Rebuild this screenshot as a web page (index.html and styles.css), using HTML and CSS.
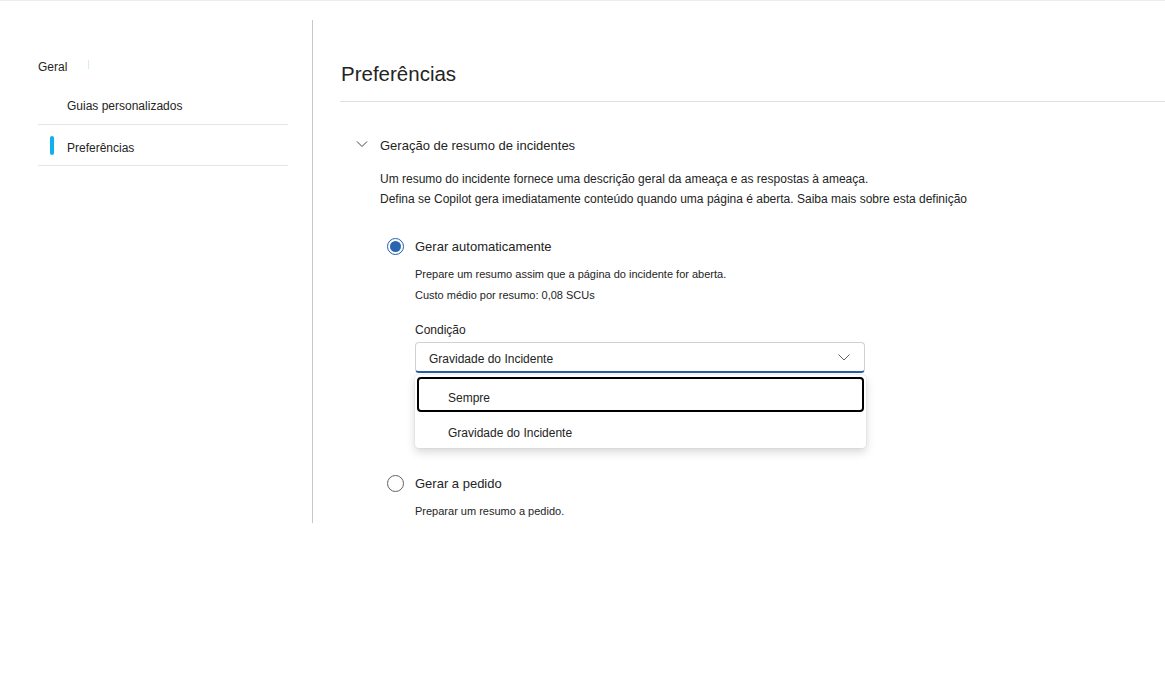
FILE: index.html
```html
<!DOCTYPE html>
<html lang="pt">
<head>
<meta charset="utf-8">
<title>Preferências</title>
<link rel="stylesheet" href="styles.css">
</head>
<body>
<div class="page">
  <nav class="sidebar">
    <div class="nav-group">Geral<span class="tick"></span></div>
    <ul class="nav-list">
      <li class="nav-item">Guias personalizados</li>
      <li class="nav-item active"><span class="indicator"></span>Preferências</li>
    </ul>
  </nav>
  <main class="main">
    <h1 class="title">Preferências</h1>
    <section class="section">
      <div class="section-head">
        <svg class="chev" width="12" height="12" viewBox="0 0 12 12"><path d="M1 3.5 L6 8.5 L11 3.5" fill="none" stroke="#424242" stroke-width="1"/></svg>
        <span>Geração de resumo de incidentes</span>
      </div>
      <div class="section-body">
        <p class="desc">Um resumo do incidente fornece uma descrição geral da ameaça e as respostas à ameaça.<br>Defina se Copilot gera imediatamente conteúdo quando uma página é aberta. Saiba mais sobre esta definição</p>

        <div class="option">
          <div class="radio-row">
            <span class="radio checked"></span>
            <span class="radio-label">Gerar automaticamente</span>
          </div>
          <div class="option-body">
            <p class="sub">Prepare um resumo assim que a página do incidente for aberta.<br>Custo médio por resumo: 0,08 SCUs</p>
            <div class="field-label">Condição</div>
            <div class="dropdown-wrap">
              <div class="dropdown">
                <span>Gravidade do Incidente</span>
                <svg class="dd-chev" width="14" height="14" viewBox="0 0 14 14"><path d="M1.5 4.5 L7 10 L12.5 4.5" fill="none" stroke="#616161" stroke-width="1"/></svg>
              </div>
              <div class="listbox">
                <div class="opt focused">Sempre</div>
                <div class="opt">Gravidade do Incidente</div>
              </div>
            </div>
          </div>
        </div>

        <div class="option second">
          <div class="radio-row">
            <span class="radio"></span>
            <span class="radio-label">Gerar a pedido</span>
          </div>
          <div class="option-body">
            <p class="sub single">Preparar um resumo a pedido.</p>
          </div>
        </div>
      </div>
    </section>
  </main>
</div>
</body>
</html>
```
FILE: styles.css
```css
* { box-sizing: border-box; }
html, body { margin: 0; padding: 0; background: #fff; }
body {
  font-family: "Liberation Sans", Arial, sans-serif;
  color: #242424;
  border-top: 1px solid #ececec;
}
.page {
  display: flex;
  align-items: stretch;
  padding-top: 19px;
}
.sidebar {
  width: 313px;
  flex: none;
  border-right: 1px solid #c8c8c8;
  padding: 36px 24px 0 38px;
}
.nav-group {
  font-size: 12px;
  line-height: 22px;
  height: 22px;
  position: relative;
}
.tick {
  position: absolute;
  left: 50px;
  top: 4px;
  width: 1px;
  height: 9px;
  background: #cdeefa;
}
.nav-list {
  list-style: none;
  margin: 6px 0 0 0;
  padding: 0;
}
.nav-item {
  position: relative;
  height: 41px;
  line-height: 40px;
  font-size: 12px;
  padding: 2px 0 0 29px;
  border-bottom: 1px solid #e6e6e6;
}
.nav-item.active { line-height: 42px; }
.indicator {
  position: absolute;
  left: 12px;
  top: 11px;
  width: 4px;
  height: 19px;
  border-radius: 2px;
  background: #0fb0ee;
}
.main {
  flex: 1;
  padding: 0 0 2px 27px;
}
.title {
  margin: 0;
  padding: 40px 0 13px 1px;
  font-size: 20.5px;
  line-height: 28px;
  font-weight: 400;
  border-bottom: 1px solid #e0e0e0;
}
.section-head {
  display: flex;
  align-items: center;
  height: 22px;
  margin-top: 32px;
  font-size: 13px;
}
.chev { margin-left: 16px; margin-right: 12px; margin-top: -3px; }
.section-body { padding-left: 40px; }
.desc {
  margin: 13px 0 0 0;
  font-size: 12px;
  line-height: 20px;
}
.option { margin-top: 27px; }
.option.second { margin-top: 100px; }
.radio-row {
  display: flex;
  align-items: center;
  height: 20px;
}
.radio {
  width: 17px;
  height: 17px;
  border-radius: 50%;
  border: 1px solid #616161;
  margin-left: 7px;
  margin-right: 11px;
  flex: none;
  position: relative;
}
.radio.checked { border-color: #1f5fa8; }
.radio.checked::after {
  content: "";
  position: absolute;
  left: 2px;
  top: 2px;
  width: 11px;
  height: 11px;
  border-radius: 50%;
  background: #2a66b0;
}
.radio-label { font-size: 13px; }
.option-body { padding-left: 35px; }
.sub {
  margin: 8px 0 0 0;
  font-size: 11px;
  line-height: 21px;
}
.sub.single { margin-top: 8px; line-height: 20px; }
.field-label {
  margin-top: 14px;
  font-size: 12px;
  line-height: 20px;
}
.dropdown-wrap {
  position: relative;
  width: 450px;
  margin-top: 2px;
}
.dropdown {
  height: 31px;
  border: 1px solid #d1d1d1;
  border-bottom: 2px solid #2c5f9e;
  border-radius: 4px;
  display: flex;
  align-items: center;
  justify-content: space-between;
  padding: 4px 13px 0 13px;
  font-size: 12px;
}
.dd-chev { margin-right: 0; margin-top: -5px; }
.listbox {
  position: absolute;
  left: 0;
  top: 33px;
  width: 451px;
  background: #fff;
  border-radius: 4px;
  padding: 2px 2px 1px 2px;
  box-shadow: 0 4px 10px rgba(0,0,0,0.16), 0 0 2px rgba(0,0,0,0.12);
  z-index: 2;
}
.opt {
  height: 35px;
  line-height: 33px;
  font-size: 12px;
  padding: 3px 0 0 29px;
  border: 2px solid transparent;
  border-radius: 4px;
}
.opt.focused { border-color: #000; }
```
